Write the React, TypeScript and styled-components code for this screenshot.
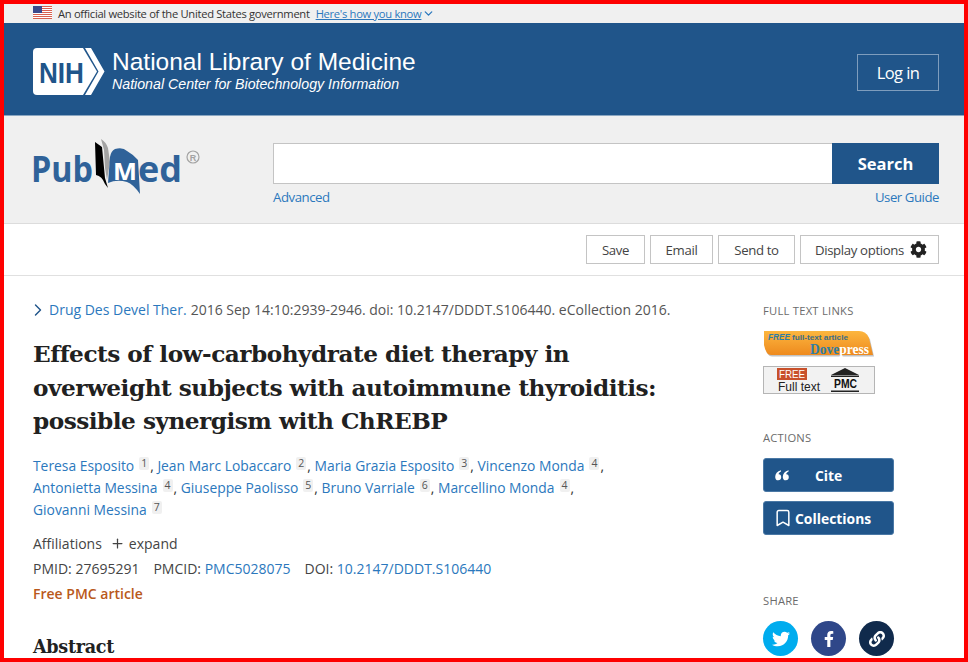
import React from "react";
import styled, { createGlobalStyle } from "styled-components";
import { ChevronDown, ChevronRight, Plus, Bookmark } from "lucide-react";
import { FaTwitter, FaFacebookF, FaCog, FaLink } from "react-icons/fa";

const Global = createGlobalStyle`
  html, body { margin: 0; padding: 0; background: #fff; }
  body { font-family: "Open Sans", "Noto Sans", sans-serif; color: #212121; }
  a { color: #2b78bd; text-decoration: none; }
`;
const Frame = styled.div`
  width: 968px; height: 662px; box-sizing: border-box; border: 4px solid #fe0000; overflow: hidden; background: #fff;
`;
const GovBanner = styled.div`
  height: 19px; background: #f0f0f0; display: flex; align-items: center; padding-left: 29px; font-size: 11.2px; letter-spacing: -0.3px; color: #333;
  a { color: #2b78bd; text-decoration: underline; margin-left: 6px; display: inline-flex; align-items: center; margin-top: -1px; }
  svg.chev { margin-left: 1px; }
`;
const Flag = styled.svg` width: 19px; height: 13px; margin-right: 6px; margin-top: -3px; `;
const Header = styled.header`
  height: 93px; box-sizing: border-box; background: #20558a; border-bottom: 1px solid #8aa6c1; display: flex; align-items: center; justify-content: space-between;
  padding: 7px 25px 0 29px;
`;
const Brand = styled.div` display: flex; align-items: center; gap: 7px; color: #fff; margin-top: -2px; `;
const BrandText = styled.div` display: flex; flex-direction: column; margin-top: -2px; `;
const BrandTitle = styled.div` font-family: "Liberation Sans", Arial, sans-serif; font-size: 24.5px; line-height: 28px; `;
const BrandSub = styled.div` font-family: "Liberation Sans", Arial, sans-serif; font-size: 14.2px; line-height: 17px; font-style: italic; `;
const LoginButton = styled.button`
  width: 82px; height: 37px; background: transparent; border: 1px solid #7e9dbd; color: #fff; font: 400 16.5px "Open Sans", sans-serif; letter-spacing: -0.6px; padding: 0;
`;
const SearchBand = styled.section`
  height: 108px; box-sizing: border-box; background: #f0f0f0; border-bottom: 1px solid #dcdcdc; display: flex; padding: 27px 25px 0 29px;
`;
const LogoSlot = styled.div` width: 242px; flex: none; margin: -5px 0 0 -2px; `;
const SearchCol = styled.div` flex: 1; `;
const SearchRow = styled.div` display: flex; height: 41px; `;
const SearchInput = styled.div` flex: 1; background: #fff; border: 1px solid #c4c4c4; border-right: none; `;
const SearchButton = styled.button`
  width: 107px; border: none; background: #20558a; color: #fff; font: 700 16.5px "Open Sans", sans-serif; padding: 0;
`;
const SearchLinks = styled.div` display: flex; justify-content: space-between; font-size: 13.2px; letter-spacing: -0.45px; line-height: 18px; margin-top: 4px; `;
const ActionBar = styled.div`
  height: 52px; box-sizing: border-box; border-bottom: 1px solid #e0e0e0; display: flex; justify-content: flex-end; align-items: flex-start; gap: 5px; padding: 11px 25px 0 0;
`;
const ToolButton = styled.button<{ $w: number }>`
  width: ${p => p.$w}px; height: 29px; box-sizing: border-box; background: #fff; border: 1px solid #c4c4c4; color: #444; font: 400 13.2px "Open Sans", sans-serif; letter-spacing: -0.35px; padding: 0;
  display: flex; align-items: center; justify-content: center; gap: 6px;
`;
const DisplayButton = styled(ToolButton)` padding-left: 3px; `;
const Body = styled.div` display: flex; padding: 0 0 0 29px; `;
const Main = styled.main` width: 730px; flex: none; padding-top: 24px; `;
const Citation = styled.div`
  display: flex; align-items: center; font-size: 14px; line-height: 20px; color: #555; white-space: nowrap;
  svg { margin: 0 1.5px 0 -5.5px; color: #20558a; flex: none; }
  a { margin-right: 4px; }
`;
const Title = styled.h1`
  font: 700 23.2px/33.5px "DejaVu Serif", "Liberation Serif", serif; color: #212121; margin: 17px 0 0; letter-spacing: -0.5px; white-space: nowrap;
`;
const Authors = styled.div` font-size: 13.85px; line-height: 22px; margin-top: 17px; color: #333; white-space: nowrap; `;
const Sup = styled.span`
  display: inline-block; background: #f0f0f0; color: #555; font-size: 10.5px; line-height: 13px; padding: 0 2px; margin: 0 1px 0 5px; vertical-align: 4px; border-radius: 2px;
`;
const Affil = styled.div` display: flex; align-items: center; font-size: 14px; line-height: 20px; margin-top: 13px; color: #444; svg { margin: 0 4px 0 8px; } `;
const Ids = styled.div` display: flex; font-size: 14px; line-height: 20px; margin-top: 5px; color: #444; gap: 14px; white-space: nowrap; `;
const FreeTag = styled.div` font-size: 14px; font-weight: 600; line-height: 20px; color: #b9591b; margin-top: 5px; `;
const Abstract = styled.h2` font: 700 17.6px/26px "DejaVu Serif", serif; margin: 30px 0 0; letter-spacing: -0.3px; color: #212121; `;
const Side = styled.aside` flex: 1; padding-top: 27px; `;
const SideHead = styled.div` font-size: 11.2px; line-height: 16px; color: #6b6b6b; letter-spacing: 0.25px; `;
const BadgeStack = styled.div` display: flex; flex-direction: column; gap: 8px; margin: 12px 0 36px; svg { display: block; } `;
const ActionBtn = styled.button`
  width: 131px; height: 34px; box-sizing: border-box; border: 1px solid #4a78a5; border-radius: 3px; background: #20558a; color: #fff;
  font: 700 13.9px "Open Sans", sans-serif; display: flex; align-items: center; padding: 0; margin-top: 9px;
  &:first-child { margin-top: 0; }
`;
const Actions = styled.div` margin-top: 12px; `;
const BtnIcon = styled.span<{ $left: number }>` display: flex; margin-left: ${p => p.$left}px; `;
const BtnLabel = styled.span<{ $gap: number }>` margin-left: ${p => p.$gap}px; `;
const ShareHead = styled(SideHead)` margin-top: 58px; `;
const ShareRow = styled.div` display: flex; gap: 13px; margin-top: 12px; `;
const ShareBtn = styled.div<{ $bg: string }>`
  width: 35px; height: 35px; border-radius: 50%; background: ${p => p.$bg}; color: #fff; display: flex; align-items: center; justify-content: center;
`;

const A = ({ n, sup, end = true }: { n: string; sup: string; end?: boolean }) => (
  <>
    <a href="#">{n}</a><Sup>{sup}</Sup>{end ? ", " : ""}
  </>
);

const NihLogo = () => (
  <svg width="72" height="47" viewBox="0 0 72 47">
    <path d="M4 0H50L64 23.5L50 47H4Q0 47 0 43V4Q0 0 4 0Z" fill="#fff" />
    <path d="M52 0H58L71.5 23.5L58 47H52L65.5 23.5Z" fill="#fff" />
    <text x="6" y="35" fontFamily="Liberation Sans" fontWeight="700" fontSize="29" fill="#20558a" textLength="45" lengthAdjust="spacingAndGlyphs">NIH</text>
  </svg>
);

const QuoteMark = () => (
  <svg width="14" height="11" viewBox="0 0 14 11" fill="#fff">
    <path d="M6 0.3V1.6C4.6 2.3 3.8 3.2 3.6 4.2C5.2 4.1 6.2 5.2 6.2 7.2C6.2 9 5 10.3 3.2 10.3C1.3 10.3 0.2 8.9 0.2 6.9C0.2 3.8 2.2 1.4 6 0.3Z" />
    <path d="M13.6 0.3V1.6C12.2 2.3 11.4 3.2 11.2 4.2C12.8 4.1 13.8 5.2 13.8 7.2C13.8 9 12.6 10.3 10.8 10.3C8.9 10.3 7.8 8.9 7.8 6.9C7.8 3.8 9.8 1.4 13.6 0.3Z" />
  </svg>
);

const PubMedLogo = () => (
  <svg width="174" height="60" viewBox="-2 0 174 60">
    <text x="-2" y="44" fontFamily="Open Sans" fontWeight="700" fontSize="35" fill="#2f6299" textLength="62" lengthAdjust="spacingAndGlyphs">Pub</text>
    <path d="M62 4L69 9L72 40L75 50L72 46Q69 38 63 37Z" fill="#000" />
    <path d="M68 1Q73 4 75 10L77 24L74 42L72 30L71 12Z" fill="#a3a3a3" />
    <path d="M77 19Q78 13 82 11Q90 9 94 13Q101 17 105 22L107 56Q100 46 94 44Q84 41 75 45Z" fill="#2f6299" />
    <text x="80" y="42" fontFamily="Open Sans" fontWeight="700" fontSize="24" fill="#fff" textLength="24" lengthAdjust="spacingAndGlyphs">M</text>
    <text x="105" y="44" fontFamily="Open Sans" fontWeight="700" fontSize="35" fill="#2f6299" textLength="44" lengthAdjust="spacingAndGlyphs">ed</text>
    <circle cx="160" cy="19" r="6" fill="none" stroke="#a3a3a3" strokeWidth="1.2" />
    <text x="156.8" y="22.5" fontFamily="Liberation Sans" fontWeight="700" fontSize="9" fill="#a3a3a3">R</text>
  </svg>
);

const DoveBadge = () => (
  <svg width="112" height="27" viewBox="0 0 112 27">
    <defs>
      <linearGradient id="dv" x1="0" y1="0" x2="0" y2="1">
        <stop offset="0" stopColor="#fcb63f" />
        <stop offset="1" stopColor="#ee8a1e" />
      </linearGradient>
    </defs>
    <path d="M1 0H96Q103 0 106 7L110 24H8Q3 24 1 14Z" fill="#999" transform="translate(1 1.5)" opacity=".6" />
    <path d="M1 0H96Q103 0 106 7L110 24H8Q3 24 1 14Z" fill="url(#dv)" />
    <text x="5" y="8.7" fontFamily="Liberation Sans" fontWeight="700" fontStyle="italic" fontSize="8.8" fill="#2e7ea6" textLength="22" lengthAdjust="spacingAndGlyphs">FREE</text>
    <text x="29" y="8.7" fontFamily="Liberation Sans" fontWeight="700" fontSize="7.2" fill="#3c6e86" textLength="56" lengthAdjust="spacingAndGlyphs">full-text article</text>
    <text x="47" y="22.5" fontFamily="Liberation Serif" fontWeight="700" fontSize="14" textLength="59" lengthAdjust="spacingAndGlyphs">
      <tspan fill="#2e7ea6">Dove</tspan><tspan fill="#fff">press</tspan>
    </text>
  </svg>
);

const PmcBadge = () => (
  <svg width="112" height="28" viewBox="0 0 112 28">
    <rect x=".5" y=".5" width="111" height="27" fill="#f2f2f2" stroke="#b5b5b5" />
    <rect x="14" y="2" width="30" height="12" fill="#c8502a" />
    <text x="16" y="12" fontFamily="Liberation Sans" fontSize="10" fill="#fff" textLength="26" lengthAdjust="spacingAndGlyphs">FREE</text>
    <text x="15" y="25" fontFamily="Liberation Sans" fontSize="12" fill="#222" textLength="42" lengthAdjust="spacingAndGlyphs">Full text</text>
    <path d="M68 9L82 2L96 9Z" fill="#222" />
    <rect x="68" y="9.5" width="28" height="1.5" fill="#222" />
    <text x="71" y="22" fontFamily="Liberation Sans" fontWeight="700" fontSize="12.4" fill="#111" textLength="23" lengthAdjust="spacingAndGlyphs">PMC</text>
    <rect x="68" y="24.5" width="28" height="1.5" fill="#222" />
  </svg>
);

export default function App() {
  return (
    <>
      <Global />
      <Frame>
        <GovBanner>
          <Flag viewBox="0 0 19 13">
            <rect width="19" height="13" fill="#fff" />
            {[0, 2, 4, 6, 8, 10, 12].map(y => <rect key={y} y={y} width="19" height="1" fill="#d8604f" />)}
            <rect width="9" height="7" fill="#3b4a8c" />
          </Flag>
          <span>An official website of the United States government</span>
          <a href="#">Here's how you know<ChevronDown className="chev" size={13} strokeWidth={2.4} /></a>
        </GovBanner>
        <Header>
          <Brand>
            <NihLogo />
            <BrandText>
              <BrandTitle>National Library of Medicine</BrandTitle>
              <BrandSub>National Center for Biotechnology Information</BrandSub>
            </BrandText>
          </Brand>
          <LoginButton>Log in</LoginButton>
        </Header>
        <SearchBand>
          <LogoSlot><PubMedLogo /></LogoSlot>
          <SearchCol>
            <SearchRow>
              <SearchInput />
              <SearchButton>Search</SearchButton>
            </SearchRow>
            <SearchLinks><a href="#">Advanced</a><a href="#">User Guide</a></SearchLinks>
          </SearchCol>
        </SearchBand>
        <ActionBar>
          <ToolButton $w={59}>Save</ToolButton>
          <ToolButton $w={63}>Email</ToolButton>
          <ToolButton $w={77}>Send to</ToolButton>
          <DisplayButton $w={139}>Display options <FaCog size={17} color="#222" /></DisplayButton>
        </ActionBar>
        <Body>
          <Main>
            <Citation>
              <ChevronRight size={20} strokeWidth={1.7} />
              <a href="#">Drug Des Devel Ther.</a> 2016 Sep 14:10:2939-2946. doi: 10.2147/DDDT.S106440. eCollection 2016.
            </Citation>
            <Title>
              Effects of low-carbohydrate diet therapy in<br />
              overweight subjects with autoimmune thyroiditis:<br />
              possible synergism with ChREBP
            </Title>
            <Authors>
              <A n="Teresa Esposito" sup="1" /><A n="Jean Marc Lobaccaro" sup="2" /><A n="Maria Grazia Esposito" sup="3" /><A n="Vincenzo Monda" sup="4" /><br />
              <A n="Antonietta Messina" sup="4" /><A n="Giuseppe Paolisso" sup="5" /><A n="Bruno Varriale" sup="6" /><A n="Marcellino Monda" sup="4" /><br />
              <A n="Giovanni Messina" sup="7" end={false} />
            </Authors>
            <Affil>Affiliations <Plus size={15} strokeWidth={2} /> expand</Affil>
            <Ids>
              <span>PMID: 27695291</span>
              <span>PMCID: <a href="#">PMC5028075</a></span>
              <span>DOI: <a href="#">10.2147/DDDT.S106440</a></span>
            </Ids>
            <FreeTag>Free PMC article</FreeTag>
            <Abstract>Abstract</Abstract>
          </Main>
          <Side>
            <SideHead>FULL TEXT LINKS</SideHead>
            <BadgeStack>
              <DoveBadge />
              <PmcBadge />
            </BadgeStack>
            <SideHead>ACTIONS</SideHead>
            <Actions>
              <ActionBtn><BtnIcon $left={11}><QuoteMark /></BtnIcon><BtnLabel $gap={26}>Cite</BtnLabel></ActionBtn>
              <ActionBtn><BtnIcon $left={9}><Bookmark size={20} strokeWidth={1.8} /></BtnIcon><BtnLabel $gap={2}>Collections</BtnLabel></ActionBtn>
            </Actions>
            <ShareHead>SHARE</ShareHead>
            <ShareRow>
              <ShareBtn $bg="#00acee"><FaTwitter size={18} /></ShareBtn>
              <ShareBtn $bg="#2f4789"><FaFacebookF size={16} /></ShareBtn>
              <ShareBtn $bg="#102a4c"><FaLink size={16} /></ShareBtn>
            </ShareRow>
          </Side>
        </Body>
      </Frame>
    </>
  );
}
